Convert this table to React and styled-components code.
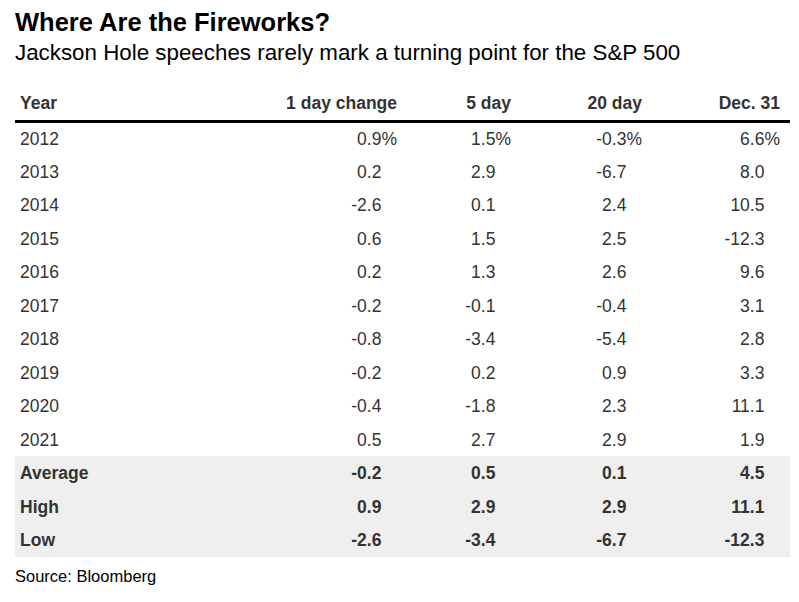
import React from "react";
import styled, { createGlobalStyle } from "styled-components";

const GlobalStyle = createGlobalStyle`
  html, body {
    margin: 0;
    padding: 0;
    background: #fff;
  }
  body {
    font-family: "Liberation Sans", Arial, sans-serif;
  }
`;

const Page = styled.div`
  width: 799px;
  height: 602px;
  box-sizing: border-box;
  padding: 7px 9px 0 15px;
`;

const Title = styled.h1`
  margin: 0;
  font-size: 25.5px;
  line-height: 30px;
  font-weight: 700;
  color: #000;
`;

const Subtitle = styled.p`
  margin: 3px 0 0;
  font-size: 22.35px;
  line-height: 26px;
  color: #000;
`;

const Table = styled.table`
  width: 775px;
  margin-top: 27px;
  border-collapse: collapse;
  table-layout: fixed;
  color: #333;
  font-size: 17.5px;
`;

const HeadCell = styled.th`
  height: 28px;
  box-sizing: border-box;
  padding: 0 ${(p) => (p.$last ? 10 : 0)}px 0 ${(p) => (p.$first ? 5 : 0)}px;
  text-align: ${(p) => (p.$first ? "left" : "right")};
  vertical-align: top;
  font-weight: 700;
  line-height: 20px;
  border-bottom: 3px solid #000;
`;

const Row = styled.tr`
  background: ${(p) => (p.$summary ? "#efefef" : "transparent")};
`;

const Cell = styled.td`
  height: 33.5px;
  box-sizing: border-box;
  padding: 1px ${(p) => (p.$last ? 10 : 0)}px 0 ${(p) => (p.$first ? 5 : 0)}px;
  text-align: ${(p) => (p.$first ? "left" : "right")};
  font-weight: ${(p) => (p.$bold ? 700 : 400)};
  line-height: 20px;
  white-space: nowrap;
`;

const Pct = styled.span`
  visibility: ${(p) => (p.$show ? "visible" : "hidden")};
`;

const Source = styled.p`
  margin: 9px 0 0;
  font-size: 16.5px;
  line-height: 20px;
  color: #000;
`;

const columns = [
  { label: "Year", width: 185 },
  { label: "1 day change", width: 197 },
  { label: "5 day", width: 114 },
  { label: "20 day", width: 131 },
  { label: "Dec. 31", width: 148 },
];

const years = [
  ["2012", "0.9", "1.5", "-0.3", "6.6"],
  ["2013", "0.2", "2.9", "-6.7", "8.0"],
  ["2014", "-2.6", "0.1", "2.4", "10.5"],
  ["2015", "0.6", "1.5", "2.5", "-12.3"],
  ["2016", "0.2", "1.3", "2.6", "9.6"],
  ["2017", "-0.2", "-0.1", "-0.4", "3.1"],
  ["2018", "-0.8", "-3.4", "-5.4", "2.8"],
  ["2019", "-0.2", "0.2", "0.9", "3.3"],
  ["2020", "-0.4", "-1.8", "2.3", "11.1"],
  ["2021", "0.5", "2.7", "2.9", "1.9"],
];

const summary = [
  ["Average", "-0.2", "0.5", "0.1", "4.5"],
  ["High", "0.9", "2.9", "2.9", "11.1"],
  ["Low", "-2.6", "-3.4", "-6.7", "-12.3"],
];

const DataRow = ({ row, bold, showPct }) => (
  <Row $summary={bold}>
    {row.map((v, i) => (
      <Cell key={i} $first={i === 0} $last={i === row.length - 1} $bold={bold}>
        {v}
        {i > 0 && <Pct $show={showPct}>%</Pct>}
      </Cell>
    ))}
  </Row>
);

export default function App() {
  return (
    <Page>
      <GlobalStyle />
      <Title>Where Are the Fireworks?</Title>
      <Subtitle>Jackson Hole speeches rarely mark a turning point for the S&amp;P 500</Subtitle>
      <Table>
        <colgroup>
          {columns.map((c) => (
            <col key={c.label} style={{ width: c.width }} />
          ))}
        </colgroup>
        <thead>
          <tr>
            {columns.map((c, i) => (
              <HeadCell key={c.label} $first={i === 0} $last={i === columns.length - 1}>
                {c.label}
              </HeadCell>
            ))}
          </tr>
        </thead>
        <tbody>
          {years.map((r, i) => (
            <DataRow key={r[0]} row={r} showPct={i === 0} />
          ))}
          {summary.map((r) => (
            <DataRow key={r[0]} row={r} bold />
          ))}
        </tbody>
      </Table>
      <Source>Source: Bloomberg</Source>
    </Page>
  );
}
